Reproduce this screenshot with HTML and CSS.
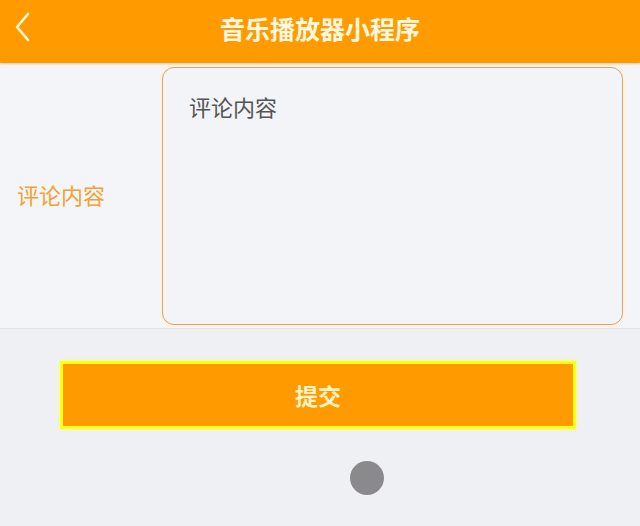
FILE: index.html
```html
<!DOCTYPE html>
<html lang="zh-CN">
<head>
    <meta charset="UTF-8">
    <meta name="viewport" content="width=device-width, initial-scale=1.0">
    <title>音乐播放器小程序</title>
    <link rel="stylesheet" href="styles.css">
</head>
<body>

    <!-- Top bar -->
    <div class="nav-bar">
        <span class="back-btn">
            <svg width="18" height="30" viewBox="0 0 18 30">
                <polyline points="14,2 3,15 14,28" fill="none" stroke="#fff6d8" stroke-width="2.6" stroke-linecap="round" stroke-linejoin="round"/>
            </svg>
        </span>
        <h1 class="nav-title">音乐播放器小程序</h1>
    </div>

    <!-- Comment form -->
    <div class="form-row">
        <label class="form-label" for="comment">评论内容</label>
        <textarea id="comment" class="comment-input" placeholder="评论内容"></textarea>
    </div>

    <div class="actions">
        <button class="submit-btn">提交</button>
    </div>

    <div class="home-dot"></div>

</body>
</html>
```

FILE: styles.css
```css
body {
    font-family: "Noto Sans CJK SC", "Noto Sans", sans-serif;
    background-color: #eff0f4;
    margin: 0;
    padding: 0;
}

/* Top bar */
.nav-bar {
    height: 63px;
    background-color: #ff9b00;
    display: flex;
    align-items: center;
    justify-content: center;
    position: relative;
    box-shadow: 0 1px 2px rgba(200, 120, 0, 0.4);
}

.back-btn {
    position: absolute;
    left: 14px;
    top: 12px;
}

.nav-title {
    margin: 0 0 8px 0;
    color: #fff8e0;
    font-size: 25px;
    font-weight: bold;
}

/* Form */
.form-row {
    display: flex;
    align-items: center;
    background-color: #f4f5f8;
    padding: 4px 17px 3px 17px;
    border-bottom: 1px solid #e2e3e7;
}

.form-label {
    width: 145px;
    color: #f5a030;
    font-size: 22px;
    margin-top: -4px;
}

.comment-input {
    flex: 1;
    height: 258px;
    box-sizing: border-box;
    border: 1.5px solid #d2a870;
    border-radius: 12px;
    background-color: #f3f4f8;
    padding: 22px 26px;
    font-family: inherit;
    font-size: 22px;
    resize: none;
    outline: none;
    box-shadow: 0 0 0 2px #fff1dc;
}

.comment-input::placeholder {
    color: #555;
}

/* Submit */
.actions {
    padding: 32px 64px 0 60px;
}

.submit-btn {
    width: 100%;
    height: 68px;
    background-color: #ff9b00;
    border: 3px solid #ffff10;
    box-shadow: 0 0 3px #ffff40;
    color: #fff2c8;
    font-family: inherit;
    font-size: 23px;
    font-weight: bold;
    cursor: pointer;
}

.home-dot {
    width: 34px;
    height: 34px;
    border-radius: 50%;
    background-color: #8a8a8c;
    margin: 32px 0 0 350px;
    filter: blur(0.6px);
}
```
